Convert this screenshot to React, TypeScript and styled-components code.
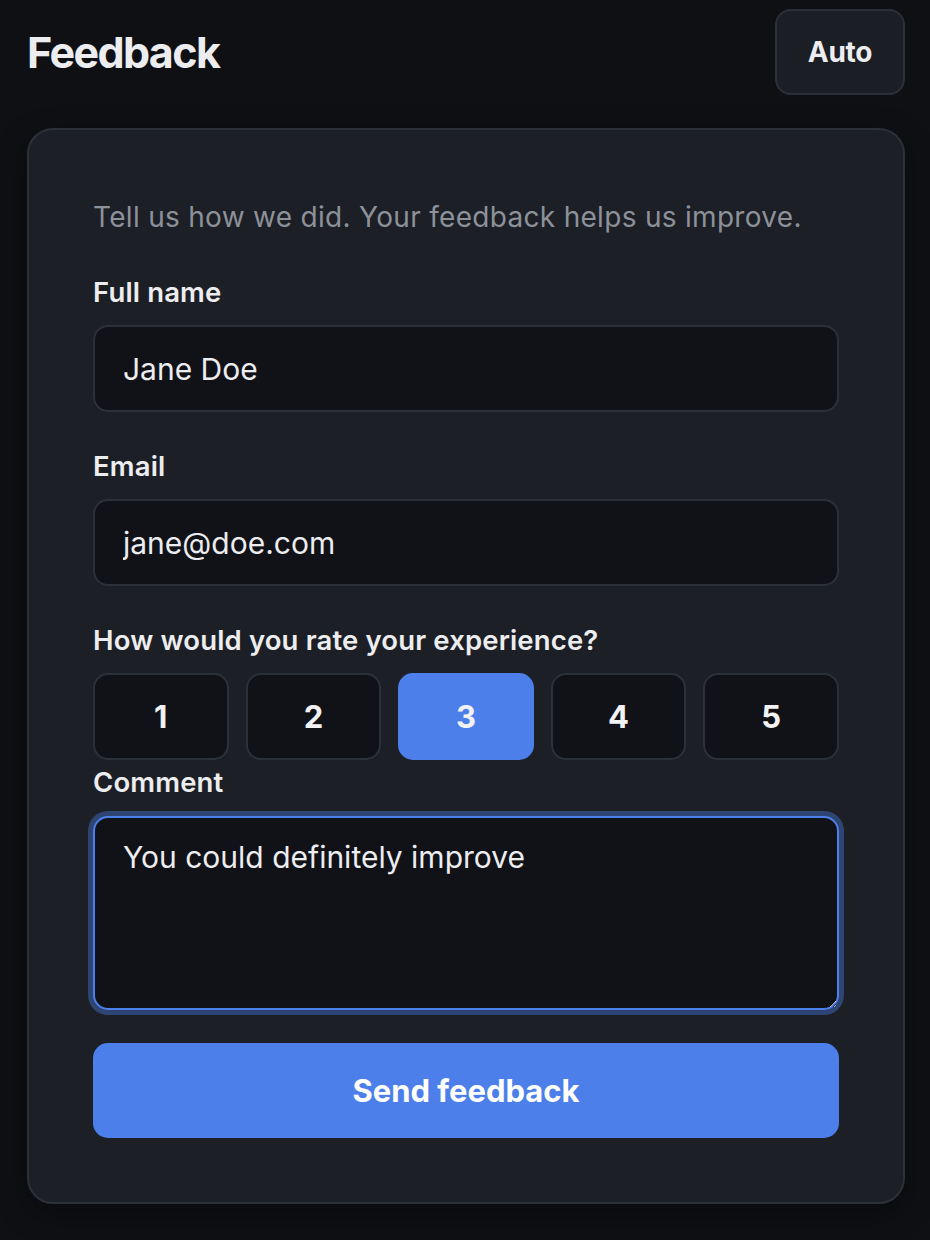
import React, { useEffect, useRef, useState } from "react";
import styled, { createGlobalStyle } from "styled-components";

const GlobalStyle = createGlobalStyle`
  html, body {
    margin: 0;
    padding: 0;
    background: #0e1014;
  }
  body {
    font-family: Inter, "Noto Sans", "Liberation Sans", sans-serif;
    color: #ededf0;
    -webkit-font-smoothing: antialiased;
  }
  * { box-sizing: border-box; }
`;

const Page = styled.div`
  min-height: 1240px;
  padding: 9px 25px 0 27px;
  background: #0e1014;
`;

const Header = styled.header`
  display: flex;
  align-items: center;
  justify-content: space-between;
  height: 86px;
  margin-bottom: 33px;
`;

const Title = styled.h1`
  margin: 0;
  font-size: 43px;
  font-weight: 700;
  letter-spacing: -1.6px;
  color: #ededf0;
  line-height: 1;
`;

const ThemeButton = styled.button`
  height: 86px;
  width: 130px;
  border-radius: 16px;
  border: 2px solid #2c3039;
  background: #1b1e25;
  color: #ededf0;
  font-family: inherit;
  font-size: 28px;
  font-weight: 700;
  letter-spacing: -0.3px;
  cursor: pointer;
`;

const Card = styled.form`
  border: 2px solid #2c3039;
  border-radius: 26px;
  background: #1c1f26;
  padding: 66px 64px 64px;
  box-shadow: 0 10px 30px rgba(0, 0, 0, 0.35);
  display: flex;
  flex-direction: column;
`;

const Subtitle = styled.p`
  margin: 0;
  font-size: 28px;
  line-height: 42px;
  letter-spacing: 0.3px;
  color: #8d919a;
`;

const Label = styled.label<{ $top: number; $bottom: number }>`
  display: block;
  margin-top: ${(p) => p.$top}px;
  margin-bottom: ${(p) => p.$bottom}px;
  font-size: 27.5px;
  font-weight: 600;
  line-height: 34px;
  letter-spacing: 0.15px;
  color: #ededf0;
`;

const Input = styled.input`
  display: block;
  width: 100%;
  height: 87px;
  padding: 0 28px;
  border-radius: 15px;
  border: 2px solid #2c3039;
  background: #101217;
  color: #ededf0;
  font-family: inherit;
  font-size: 30px;
  outline: none;
`;

const RatingRow = styled.div`
  display: grid;
  grid-template-columns: repeat(5, 1fr);
  gap: 17px;
`;

const RatingButton = styled.button<{ $active: boolean }>`
  height: 87px;
  border-radius: 15px;
  border: 2px solid ${(p) => (p.$active ? "#4c7fea" : "#2c3039")};
  background: ${(p) => (p.$active ? "#4c7fea" : "#101217")};
  color: #f2f2f4;
  font-family: inherit;
  font-size: 31px;
  font-weight: 700;
  cursor: pointer;
`;

const TextArea = styled.textarea`
  display: block;
  width: 100%;
  height: 194px;
  padding: 17px 28px;
  border-radius: 15px;
  border: 2px solid #4c7fea;
  box-shadow: 0 0 0 5px rgba(76, 127, 234, 0.4);
  background: #101217;
  color: #ededf0;
  caret-color: #ededf0;
  font-family: inherit;
  font-size: 30px;
  line-height: 44px;
  outline: none;
  resize: vertical;
`;

const SubmitButton = styled.button`
  margin-top: 33px;
  height: 95px;
  width: 100%;
  border: none;
  border-radius: 15px;
  background: #4c7fea;
  color: #ffffff;
  font-family: inherit;
  font-size: 31px;
  font-weight: 700;
  cursor: pointer;
`;

export default function App() {
  const [rating, setRating] = useState(3);
  const [name, setName] = useState("Jane Doe");
  const [email, setEmail] = useState("jane@doe.com");
  const [comment, setComment] = useState("You could definitely improve");
  const ref = useRef<HTMLTextAreaElement>(null);

  useEffect(() => {
    const el = ref.current;
    if (el) {
      el.focus();
      const len = el.value.length;
      el.setSelectionRange(len, len);
    }
  }, []);

  return (
    <>
      <GlobalStyle />
      <Page>
        <Header>
          <Title>Feedback</Title>
          <ThemeButton type="button">Auto</ThemeButton>
        </Header>
        <Card onSubmit={(e) => e.preventDefault()}>
          <Subtitle>Tell us how we did. Your feedback helps us improve.</Subtitle>

          <Label $top={37} $bottom={16} htmlFor="name">
            Full name
          </Label>
          <Input id="name" value={name} onChange={(e) => setName(e.target.value)} />

          <Label $top={37} $bottom={16} htmlFor="email">
            Email
          </Label>
          <Input id="email" value={email} onChange={(e) => setEmail(e.target.value)} />

          <Label $top={37} $bottom={16}>How would you rate your experience?</Label>
          <RatingRow>
            {[1, 2, 3, 4, 5].map((n) => (
              <RatingButton
                key={n}
                type="button"
                $active={rating === n}
                onClick={() => setRating(n)}
              >
                {n}
              </RatingButton>
            ))}
          </RatingRow>

          <Label $top={5} $bottom={17} htmlFor="comment">
            Comment
          </Label>
          <TextArea
            id="comment"
            ref={ref}
            value={comment}
            onChange={(e) => setComment(e.target.value)}
          />

          <SubmitButton type="submit">Send feedback</SubmitButton>
        </Card>
      </Page>
    </>
  );
}
